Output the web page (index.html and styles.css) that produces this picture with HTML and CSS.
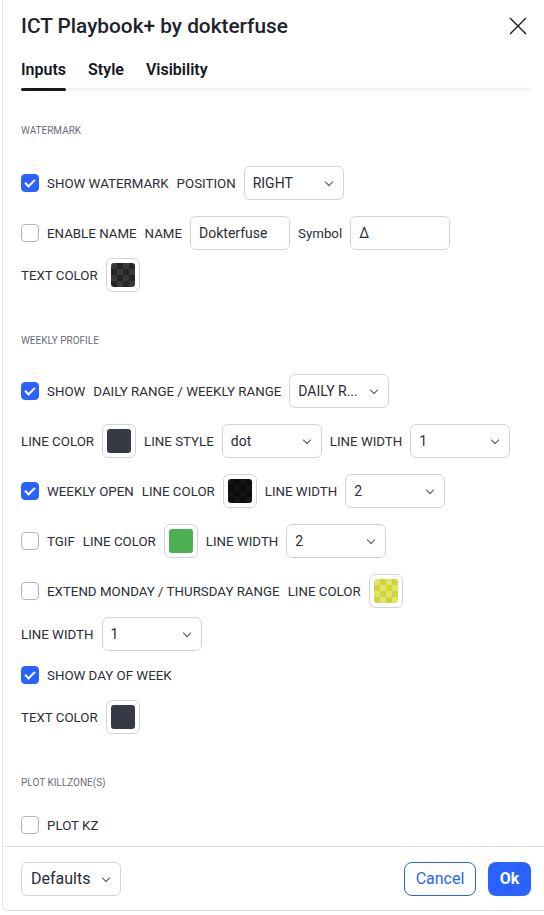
FILE: index.html
```html
<!DOCTYPE html>
<html lang="en">
<head>
  <meta charset="UTF-8" />
  <meta name="viewport" content="width=device-width, initial-scale=1.0"/>
  <title>ICT Playbook+ by dokterfuse</title>
  <link rel="stylesheet" href="styles.css">
</head>
<body>
  <div class="dialog">
    <div class="head">
      <h1 class="title">ICT Playbook+ by dokterfuse</h1>
      <button class="close" type="button" aria-label="Close">
        <svg width="18" height="18" viewBox="0 0 18 18"><path d="M1 1l16 16M17 1L1 17" stroke="#131722" stroke-width="1.3" fill="none"/></svg>
      </button>
    </div>

    <div class="tabs">
      <span class="tab active">Inputs</span>
      <span class="tab">Style</span>
      <span class="tab">Visibility</span>
    </div>

    <div class="content">
      <div class="section first">WATERMARK</div>

      <div class="row r-first">
        <span class="check on"></span>
        <span class="label">SHOW WATERMARK</span>
        <span class="label">POSITION</span>
        <span class="select">RIGHT</span>
      </div>
      <div class="row">
        <span class="check"></span>
        <span class="label">ENABLE NAME</span>
        <span class="label">NAME</span>
        <span class="input">Dokterfuse</span>
        <span class="label">Symbol</span>
        <span class="input">Δ</span>
      </div>
      <div class="row tight">
        <span class="label">TEXT COLOR</span>
        <span class="swatch"><span class="fill checker-dark"></span></span>
      </div>

      <div class="section">WEEKLY PROFILE</div>

      <div class="row r-first2">
        <span class="check on"></span>
        <span class="label">SHOW</span>
        <span class="label">DAILY RANGE / WEEKLY RANGE</span>
        <span class="select">DAILY R...</span>
      </div>
      <div class="row">
        <span class="label">LINE COLOR</span>
        <span class="swatch"><span class="fill slate"></span></span>
        <span class="label">LINE STYLE</span>
        <span class="select">dot</span>
        <span class="label">LINE WIDTH</span>
        <span class="select">1</span>
      </div>
      <div class="row">
        <span class="check on"></span>
        <span class="label">WEEKLY OPEN</span>
        <span class="label">LINE COLOR</span>
        <span class="swatch"><span class="fill black"></span></span>
        <span class="label">LINE WIDTH</span>
        <span class="select">2</span>
      </div>
      <div class="row">
        <span class="check"></span>
        <span class="label">TGIF</span>
        <span class="label">LINE COLOR</span>
        <span class="swatch"><span class="fill green"></span></span>
        <span class="label">LINE WIDTH</span>
        <span class="select">2</span>
      </div>
      <div class="row">
        <span class="check"></span>
        <span class="label">EXTEND MONDAY / THURSDAY RANGE</span>
        <span class="label">LINE COLOR</span>
        <span class="swatch"><span class="fill checker-yellow"></span></span>
      </div>
      <div class="row m9">
        <span class="label">LINE WIDTH</span>
        <span class="select">1</span>
      </div>
      <div class="row m7">
        <span class="check on"></span>
        <span class="label">SHOW DAY OF WEEK</span>
      </div>
      <div class="row tight">
        <span class="label">TEXT COLOR</span>
        <span class="swatch"><span class="fill slate"></span></span>
      </div>

      <div class="section">PLOT KILLZONE(S)</div>

      <div class="row r-last">
        <span class="check"></span>
        <span class="label">PLOT KZ</span>
      </div>
    </div>

    <div class="footer">
      <span class="select defaults">Defaults</span>
      <div class="actions">
        <button class="btn cancel" type="button">Cancel</button>
        <button class="btn ok" type="button">Ok</button>
      </div>
    </div>
  </div>
</body>
</html>
```

FILE: styles.css
```css
body {
  margin: 0;
  background-color: #fff;
  font-family: Roboto, "Open Sans", Arial, sans-serif;
  color: #131722;
}
.dialog {
  margin-left: 2px;
  height: 911px;
  border-left: 1px solid #e0e3eb;
  border-bottom: 1px solid #e0e3eb;
  border-bottom-left-radius: 6px;
  padding: 0 13px 0 18px;
  box-sizing: border-box;
  position: relative;
}
.head {
  height: 52px;
  display: flex;
  align-items: center;
  justify-content: space-between;
}
.title {
  margin: 0;
  font-size: 20.8px;
  font-weight: 500;
  color: #1e222d;
}
.close {
  border: none;
  background: none;
  padding: 0;
  margin-right: 4px;
  width: 18px;
  height: 18px;
  cursor: pointer;
}
.tabs {
  display: flex;
  gap: 22px;
  height: 36px;
  border-bottom: 3px solid #f0f3fa;
}
.tab {
  font-size: 16px;
  font-weight: 600;
  line-height: 36px;
  position: relative;
}
.tab.active::after {
  content: "";
  position: absolute;
  left: 0;
  right: 0;
  bottom: -3px;
  height: 3px;
  border-radius: 2px;
  background-color: #131722;
}
.section {
  font-size: 10px;
  line-height: 16px;
  color: #6a6d78;
  margin-top: 41px;
}
.section.first {
  margin-top: 32px;
}
.row {
  display: flex;
  align-items: center;
  gap: 8px;
  height: 34px;
  margin-top: 16px;
  font-size: 14px;
}
.row.r-first { margin-top: 27px; }
.row.r-first2 { margin-top: 25px; }
.row.r-last { margin-top: 17px; }
.row.tight { margin-top: 8px; }
.row.m9 { margin-top: 9px; }
.row.m7 { margin-top: 7px; }
.label {
  font-size: 13.3px;
  color: #2a2e39;
  white-space: nowrap;
}
.check {
  width: 18px;
  height: 18px;
  box-sizing: border-box;
  border: 1px solid #b2b5be;
  border-radius: 4px;
  flex: none;
  position: relative;
}
.check.on {
  background-color: #2962ff;
  border-color: #2962ff;
}
.check.on::after {
  content: "";
  position: absolute;
  left: 5px;
  top: 2px;
  width: 4px;
  height: 8px;
  border: solid #fff;
  border-width: 0 2px 2px 0;
  transform: rotate(45deg);
}
.select, .input {
  width: 100px;
  height: 34px;
  box-sizing: border-box;
  border: 1px solid #d1d4dc;
  border-radius: 6px;
  padding-left: 8px;
  display: flex;
  align-items: center;
  flex: none;
  position: relative;
  white-space: nowrap;
  color: #2a2e39;
}
.select::after {
  content: "";
  position: absolute;
  right: 11px;
  top: 12px;
  width: 5px;
  height: 5px;
  border: solid #50535e;
  border-width: 0 1.2px 1.2px 0;
  transform: rotate(45deg);
}
.swatch {
  width: 34px;
  height: 34px;
  box-sizing: border-box;
  border: 1px solid #d1d4dc;
  border-radius: 6px;
  padding: 4px;
  flex: none;
}
.fill {
  display: block;
  width: 24px;
  height: 24px;
  border-radius: 3px;
}
.slate { background-color: #363a45; }
.green { background-color: #4caf50; }
.black {
  background: repeating-conic-gradient(#0c0c0c 0 25%, #141414 0 50%) 0 0 / 12px 12px;
}
.checker-dark {
  background: repeating-conic-gradient(#262626 0 25%, #3a3a3a 0 50%) 0 0 / 12px 12px;
}
.checker-yellow {
  background: repeating-conic-gradient(#d2d53a 0 25%, #e0e36c 0 50%) 0 0 / 12px 12px;
}
.footer {
  position: absolute;
  left: 0;
  right: 0;
  bottom: 0;
  height: 63px;
  border-top: 1px solid #e0e3eb;
  display: flex;
  align-items: center;
  justify-content: space-between;
  padding: 0 13px 0 18px;
  box-sizing: content-box;
}
.select.defaults {
  font-size: 16px;
  padding-left: 9px;
}
.actions {
  display: flex;
  gap: 12px;
}
.btn {
  height: 34px;
  border-radius: 8px;
  font-family: inherit;
  font-size: 16px;
  cursor: pointer;
}
.btn.cancel {
  width: 72px;
  border: 1px solid #2962ff;
  background-color: #fff;
  color: #2962ff;
}
.btn.ok {
  width: 43px;
  border: none;
  background-color: #2962ff;
  color: #fff;
  font-weight: 700;
}
```
